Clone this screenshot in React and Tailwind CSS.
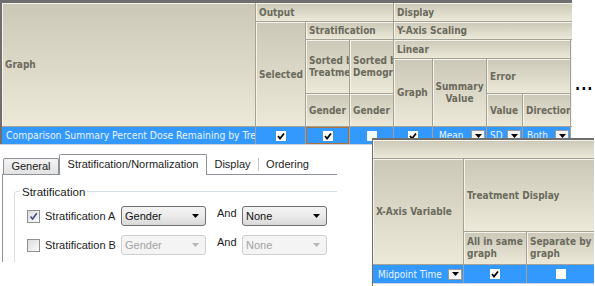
import React from 'react';

const hdr =
  'bg-linear-to-b from-[#cbc8b7] to-[#ece9d9] text-[#6b6a5c] font-bold px-[3px] flex items-center overflow-hidden whitespace-nowrap shadow-[inset_1px_1px_0_#f6f4ea]';
const blue = 'bg-[#3399ff] flex items-center overflow-hidden whitespace-nowrap';

function Check({ on = true }) {
  return (
    <span className="inline-flex h-[10px] w-[10px] items-center justify-center bg-white">
      {on && (
        <svg width="8" height="8" viewBox="0 0 8 8">
          <path d="M1 4 L3 6.5 L7 1.5" fill="none" stroke="#000" strokeWidth="1.8" />
        </svg>
      )}
    </span>
  );
}

function DropBtn() {
  return (
    <span className="ml-auto mr-[1px] inline-flex h-[11px] w-[14px] shrink-0 items-center justify-center border border-[#9a9a9a] bg-[#f4f4f4]">
      <svg width="7" height="4" viewBox="0 0 7 4">
        <path d="M0 0 H7 L3.5 4 Z" fill="#000" />
      </svg>
    </span>
  );
}

function WinCheck({ on }) {
  return (
    <span className="inline-flex h-[13px] w-[13px] items-center justify-center border border-[#8e8f8f] bg-linear-to-br from-[#dcdcdc] to-[#fbfbfb]">
      {on && (
        <svg width="9" height="9" viewBox="0 0 9 9">
          <path d="M1.5 4.5 L3.6 7 L7.8 1.2" fill="none" stroke="#3b4e8a" strokeWidth="1.6" />
        </svg>
      )}
    </span>
  );
}

function Combo({ label, disabled }) {
  return (
    <div
      className={`flex h-[20px] w-[85px] items-center rounded-[3px] border px-[3px] ${
        disabled
          ? 'border-[#cfcfcf] bg-[#f4f4f4] text-[#a3a3a3]'
          : 'border-[#707070] bg-linear-to-b from-[#f3f3f3] via-[#ebebeb] to-[#d8d8d8] text-[#111]'
      }`}
    >
      <span>{label}</span>
      <svg className="ml-auto mr-[3px]" width="7" height="4" viewBox="0 0 7 4">
        <path d="M0 0 H7 L3.5 4 Z" fill={disabled ? '#b5b5b5' : '#000'} />
      </svg>
    </div>
  );
}

export default function App() {
  return (
    <div className="relative h-[286px] w-[595px] overflow-hidden bg-white font-['DejaVu_Sans_Condensed','DejaVu_Sans',sans-serif] text-[10px]">
      <div className="flex items-start">
        <div className="w-[572px]">
          <div className="grid grid-cols-[253px_49px_43px_43px_38px_53px_35px_47px_1px] grid-rows-[18px_17px_18px_34px_32px_17px] gap-px border-l-2 border-t-[3px] border-[#6f6f6f] bg-[#a3a296]">
            <div className={`${hdr} col-start-1 row-start-1 row-span-5`}>Graph</div>
            <div className={`${hdr} col-start-2 col-span-3 row-start-1`}>Output</div>
            <div className={`${hdr} col-start-5 col-span-5 row-start-1`}>Display</div>
            <div className={`${hdr} col-start-2 row-start-2 row-span-4`}>Selected</div>
            <div className={`${hdr} col-start-3 col-span-2 row-start-2`}>Stratification</div>
            <div className={`${hdr} col-start-5 col-span-5 row-start-2`}>Y-Axis Scaling</div>
            <div className={`${hdr} col-start-3 row-start-3 row-span-2 flex-col !items-start justify-center leading-[12px]`}>
              <span>Sorted by</span>
              <span>Treatment</span>
            </div>
            <div className={`${hdr} col-start-4 row-start-3 row-span-2 flex-col !items-start justify-center leading-[12px]`}>
              <span>Sorted by</span>
              <span>Demographic</span>
            </div>
            <div className={`${hdr} col-start-5 col-span-4 row-start-3`}>Linear</div>
            <div className={`${hdr} col-start-9 row-start-3 row-span-3 !px-0`} />
            <div className={`${hdr} col-start-5 row-start-4 row-span-2`}>Graph</div>
            <div className={`${hdr} col-start-6 row-start-4 row-span-2 flex-col justify-center !px-0 text-center leading-[12px]`}>
              <span>Summary</span>
              <span>Value</span>
            </div>
            <div className={`${hdr} col-start-7 col-span-2 row-start-4`}>Error</div>
            <div className={`${hdr} col-start-3 row-start-5`}>Gender</div>
            <div className={`${hdr} col-start-4 row-start-5`}>Gender</div>
            <div className={`${hdr} col-start-7 row-start-5`}>Value</div>
            <div className={`${hdr} col-start-8 row-start-5`}>Direction</div>

            <div className={`${blue} col-start-1 row-start-6 px-[4px] text-[10.3px] text-[#e9f3ff]`}>
              Comparison Summary Percent Dose Remaining by Treatment
            </div>
            <div className={`${blue} col-start-2 row-start-6 justify-center`}>
              <Check />
            </div>
            <div className={`${blue} col-start-3 row-start-6 justify-center border border-[#a8703f]`}>
              <Check />
            </div>
            <div className={`${blue} col-start-4 row-start-6 justify-center`}>
              <Check on={false} />
            </div>
            <div className={`${blue} col-start-5 row-start-6 justify-center`}>
              <Check />
            </div>
            <div className={`${blue} col-start-6 row-start-6 pl-[6px] text-[#e9f3ff]`}>
              Mean
              <DropBtn />
            </div>
            <div className={`${blue} col-start-7 row-start-6 pl-[3px] text-[#e9f3ff]`}>
              SD
              <DropBtn />
            </div>
            <div className={`${blue} col-start-8 row-start-6 pl-[4px] text-[#e9f3ff]`}>
              Both
              <DropBtn />
            </div>
            <div className="col-start-9 row-start-6 bg-white" />
          </div>
          <div className="h-px bg-[#cdd3db]" />
        </div>
        <span className="ml-[3px] mt-[78px] text-[15px] font-bold leading-none tracking-[1px] text-black">...</span>
      </div>

      <div className="ml-[2px] mt-[5px] h-[112px] w-[335px] overflow-hidden font-['Liberation_Sans',Arial,sans-serif] text-[11px] text-[#1b1b1b]">
        <div className="flex h-[24px] items-end pl-[1px]">
          <div className="flex h-[16px] w-[56px] items-center justify-center rounded-t-[2px] border border-b-0 border-[#8d9097] bg-linear-to-b from-[#f4f4f4] to-[#e2e2e2]">
            General
          </div>
          <div className="relative z-10 -mb-px flex h-[21px] w-[148px] items-center justify-center rounded-t-[2px] border border-b-0 border-[#8d9097] bg-white pb-[2px]">
            Stratification/Normalization
          </div>
          <div className="mb-[3px] flex h-[13px] w-[52px] items-center justify-center border-r border-[#c4c4c4]">Display</div>
          <div className="mb-[3px] flex h-[13px] w-[57px] items-center justify-center">Ordering</div>
        </div>
        <div className="h-full border-l border-t border-[#8d9097] bg-white pl-[11px] pt-[16px]">
          <div className="relative h-[120px] w-[360px] rounded-[3px] border border-[#d5dfe5] pl-[12px] pt-[14px]">
            <span className="absolute -top-[8px] left-[5px] bg-white px-[2px] text-[11.5px]">Stratification</span>
            <div className="flex h-[20px] items-center">
              <WinCheck on />
              <span className="ml-[5px] w-[76px]">Stratification A</span>
              <Combo label="Gender" />
              <span className="mb-[6px] ml-[11px] w-[25px]">And</span>
              <Combo label="None" />
            </div>
            <div className="mt-[9px] flex h-[20px] items-center">
              <WinCheck />
              <span className="ml-[5px] w-[76px]">Stratification B</span>
              <Combo label="Gender" disabled />
              <span className="mb-[6px] ml-[11px] w-[25px]">And</span>
              <Combo label="None" disabled />
            </div>
          </div>
        </div>
      </div>

      <div className="absolute left-[372px] top-[138px] h-[148px] w-[222px] border-l border-t-2 border-[#6f6f6f] bg-white">
        <div className="grid grid-cols-[90px_62px_67px] grid-rows-[18px_72px_32px_18px] gap-px bg-[#a3a296]">
          <div className={`${hdr} col-span-3`} />
          <div className={`${hdr} col-start-1 row-start-2 row-span-2`}>X-Axis Variable</div>
          <div className={`${hdr} col-start-2 col-span-2 row-start-2`}>Treatment Display</div>
          <div className={`${hdr} col-start-2 row-start-3 flex-col !items-start justify-center leading-[12px]`}>
            <span>All in same</span>
            <span>graph</span>
          </div>
          <div className={`${hdr} col-start-3 row-start-3 flex-col !items-start justify-center leading-[12px]`}>
            <span>Separate by</span>
            <span>graph</span>
          </div>
          <div className={`${blue} col-start-1 row-start-4 pl-[5px] text-[#e9f3ff]`}>
            Midpoint Time
            <DropBtn />
          </div>
          <div className={`${blue} col-start-2 row-start-4 justify-center`}>
            <Check />
          </div>
          <div className={`${blue} col-start-3 row-start-4 justify-center`}>
            <Check on={false} />
          </div>
        </div>
        <div className="h-px bg-[#cdd3db]" />
      </div>
    </div>
  );
}
